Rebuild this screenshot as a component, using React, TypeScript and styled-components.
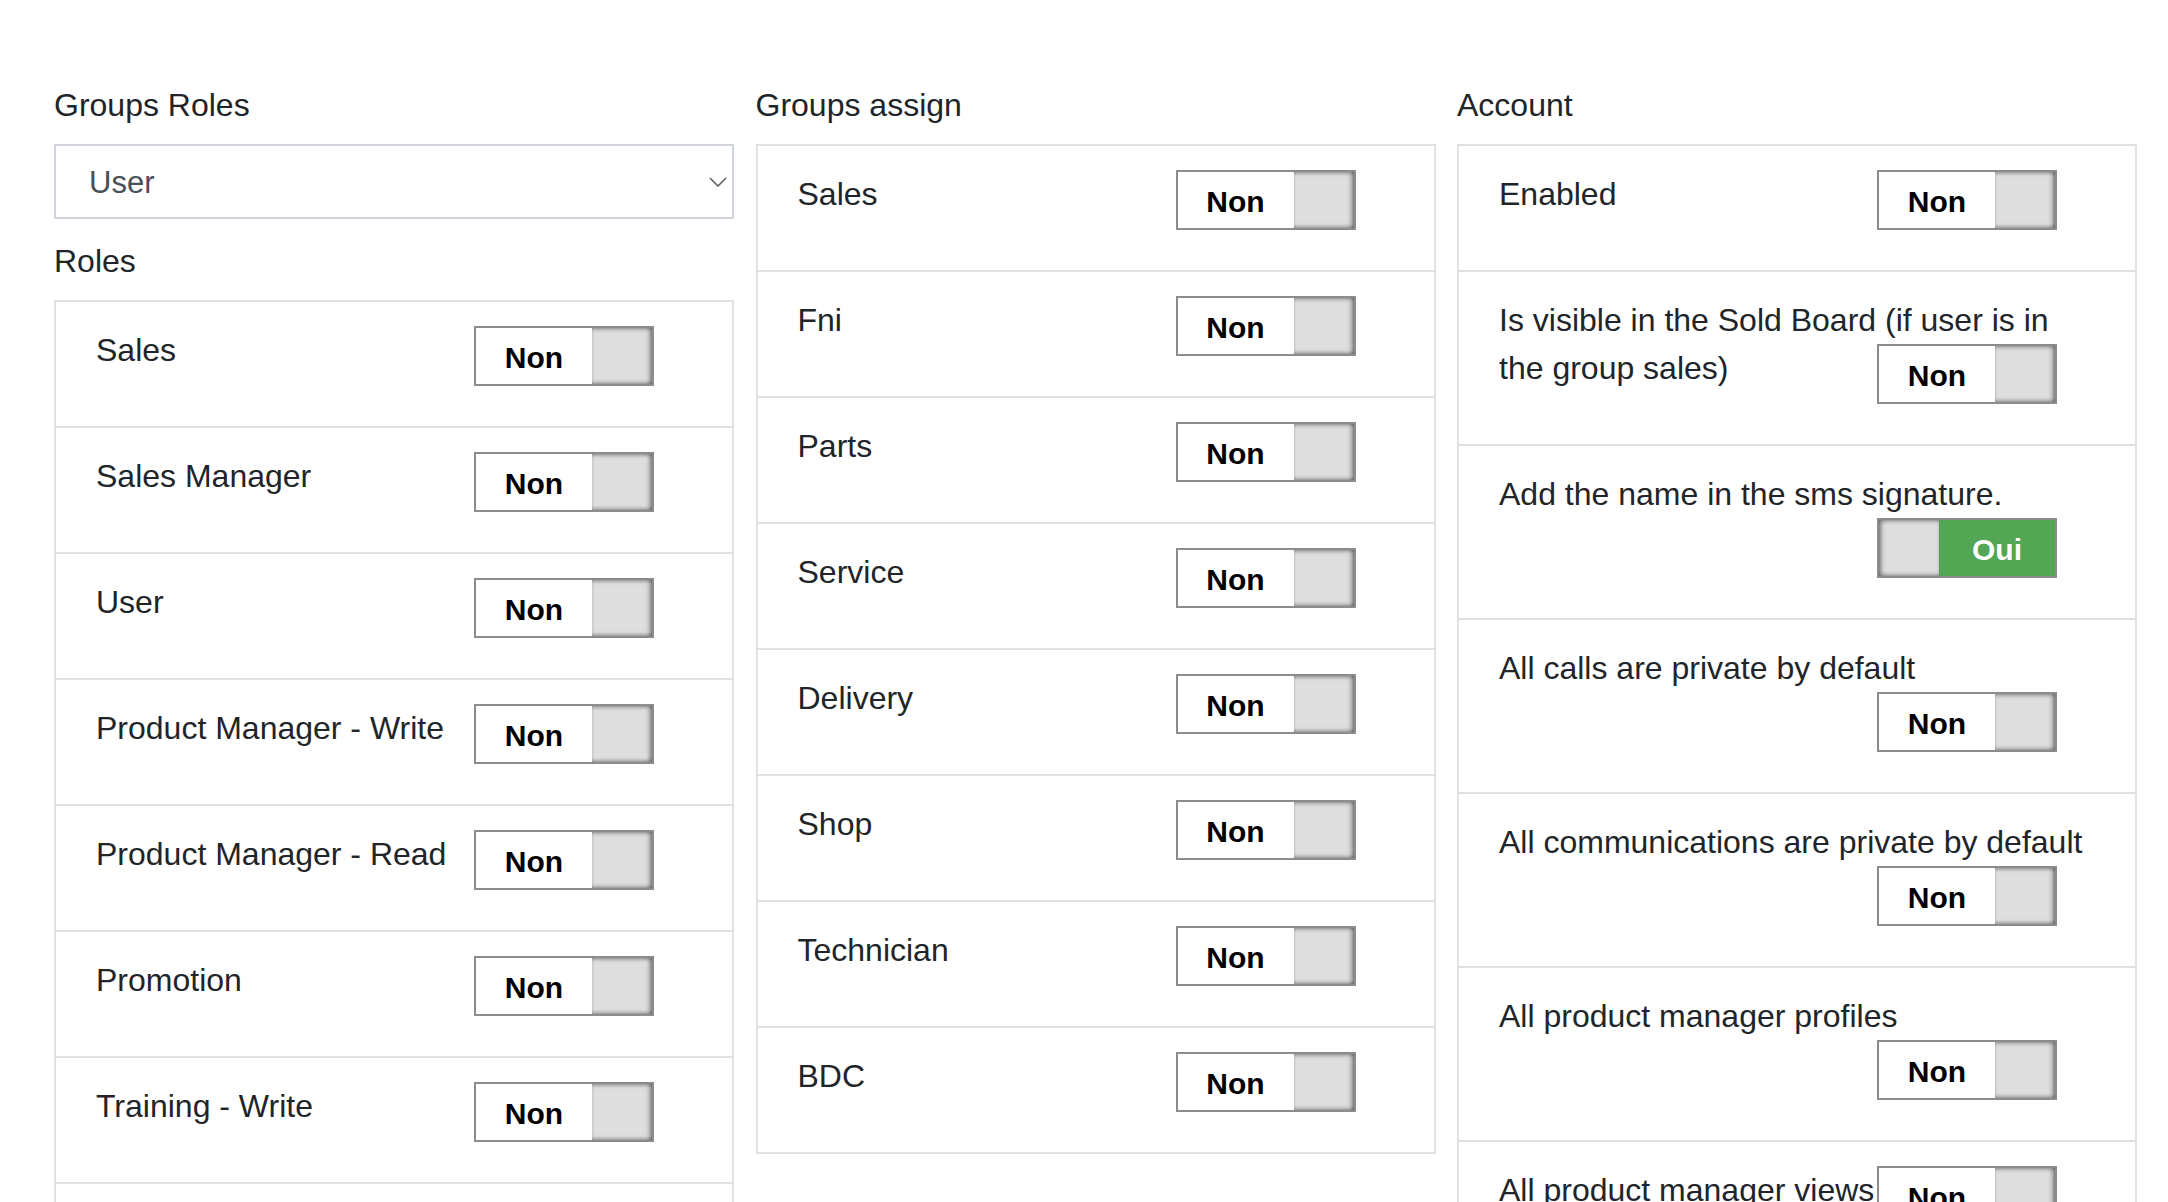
import React from 'react';
import styled, { createGlobalStyle } from 'styled-components';

const GlobalStyle = createGlobalStyle`
  html, body {
    margin: 0;
    padding: 0;
    background: #fff;
    overflow: hidden;
  }
  body {
    font-family: "Liberation Sans", Arial, sans-serif;
    color: #212529;
  }
`;

const Page = styled.div`
  display: grid;
  grid-template-columns: repeat(3, 680px);
  column-gap: 21.5px;
  align-items: start;
  padding: 81px 0 0 54px;
`;

const Column = styled.section`
  display: flex;
  flex-direction: column;
`;

const Heading = styled.h2<{ $spaced?: boolean }>`
  margin: ${(p) => (p.$spaced ? '18px' : '0')} 0 15px;
  font-size: 32px;
  font-weight: 400;
  line-height: 48px;
  color: #212529;
`;

const SelectBox = styled.div`
  box-sizing: border-box;
  height: 75px;
  display: flex;
  align-items: center;
  justify-content: space-between;
  padding: 0 5px 0 33px;
  border: 2px solid #ced4da;
  font-size: 31px;
  color: #495057;
  background: #fff;

  & > span {
    padding-top: 3px;
  }
`;

const Panel = styled.div`
  border: 2px solid #e0e0e0;
`;

const Row = styled.div`
  display: flow-root;
  padding: 24px 42px 40px 40px;
  font-size: 32px;
  line-height: 48px;
  color: #212529;

  & + & {
    border-top: 2px solid #e0e0e0;
  }
`;

const Toggle = styled.span<{ $on?: boolean }>`
  float: right;
  margin-right: 36px;
  box-sizing: border-box;
  width: 180px;
  height: 60px;
  display: flex;
  flex-direction: ${(p) => (p.$on ? 'row-reverse' : 'row')};
  border: 2px solid #8c8c8c;
  overflow: hidden;
  cursor: pointer;
`;

const ToggleLabel = styled.span<{ $on?: boolean }>`
  flex: 1;
  display: flex;
  align-items: center;
  justify-content: center;
  padding-top: 3px;
  background: ${(p) => (p.$on ? '#53a653' : '#fff')};
  color: ${(p) => (p.$on ? '#fff' : '#000')};
  font-size: 30px;
  font-weight: 700;
  line-height: 1;
`;

const Handle = styled.span<{ $on?: boolean }>`
  flex: 0 0 60px;
  background: #dedede;
  box-shadow: ${(p) =>
    p.$on
      ? 'inset 4px 0 5px -2px rgba(0,0,0,0.45), inset 0 3px 4px -2px rgba(0,0,0,0.35), inset 0 -3px 4px -2px rgba(0,0,0,0.35)'
      : 'inset -4px 0 5px -2px rgba(0,0,0,0.45), inset 0 3px 4px -2px rgba(0,0,0,0.35), inset 0 -3px 4px -2px rgba(0,0,0,0.35)'};
`;

function Switch({ on = false }: { on?: boolean }) {
  return (
    <Toggle $on={on}>
      <ToggleLabel $on={on}>{on ? 'Oui' : 'Non'}</ToggleLabel>
      <Handle $on={on} />
    </Toggle>
  );
}

function Chevron() {
  return (
    <svg width="18" height="10" viewBox="0 0 18 10" fill="none">
      <polyline points="1,1 9,9 17,1" stroke="#5a5f66" strokeWidth="1.6" />
    </svg>
  );
}

interface Item {
  label: string;
  on?: boolean;
}

const roles: Item[] = [
  { label: 'Sales' },
  { label: 'Sales Manager' },
  { label: 'User' },
  { label: 'Product Manager - Write' },
  { label: 'Product Manager - Read' },
  { label: 'Promotion' },
  { label: 'Training - Write' },
  { label: 'Training - Read' },
];

const groups: Item[] = [
  { label: 'Sales' },
  { label: 'Fni' },
  { label: 'Parts' },
  { label: 'Service' },
  { label: 'Delivery' },
  { label: 'Shop' },
  { label: 'Technician' },
  { label: 'BDC' },
];

const account: Item[] = [
  { label: 'Enabled' },
  { label: 'Is visible in the Sold Board (if user is in the group sales)' },
  { label: 'Add the name in the sms signature.', on: true },
  { label: 'All calls are private by default' },
  { label: 'All communications are private by default' },
  { label: 'All product manager profiles' },
  { label: 'All product manager views' },
  { label: 'All product manager settings' },
];

function ToggleList({ items }: { items: Item[] }) {
  return (
    <Panel>
      {items.map((item) => (
        <Row key={item.label}>
          {item.label}
          <Switch on={item.on} />
        </Row>
      ))}
    </Panel>
  );
}

export default function App() {
  return (
    <>
      <GlobalStyle />
      <Page>
        <Column>
          <Heading>Groups Roles</Heading>
          <SelectBox>
            <span>User</span>
            <Chevron />
          </SelectBox>
          <Heading $spaced>Roles</Heading>
          <ToggleList items={roles} />
        </Column>
        <Column>
          <Heading>Groups assign</Heading>
          <ToggleList items={groups} />
        </Column>
        <Column>
          <Heading>Account</Heading>
          <ToggleList items={account} />
        </Column>
      </Page>
    </>
  );
}
